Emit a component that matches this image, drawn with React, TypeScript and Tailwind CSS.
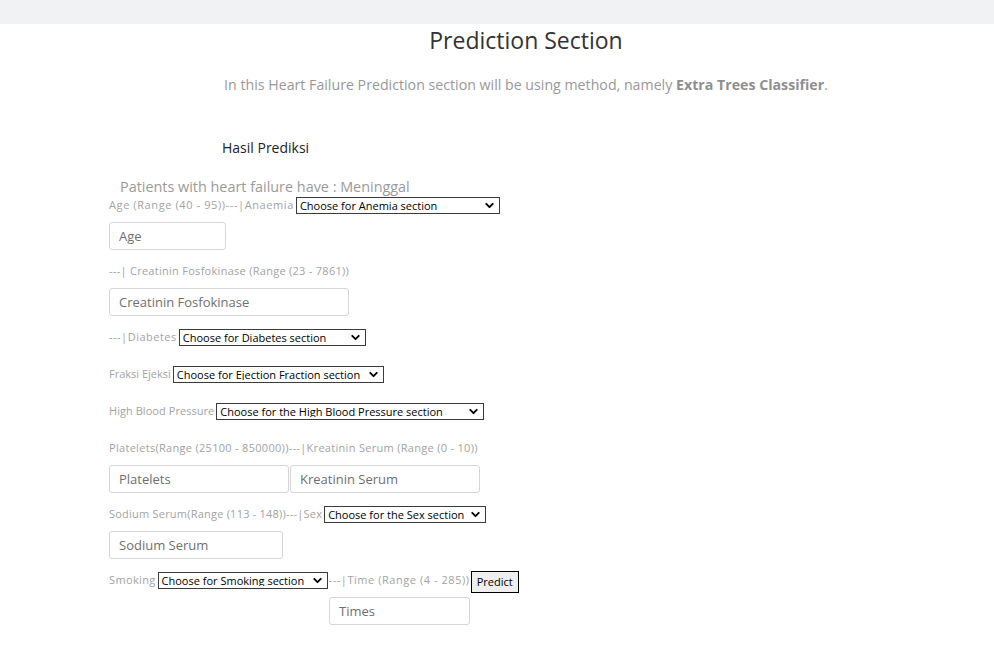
import { ChevronDown } from "lucide-react";

const font = { fontFamily: '"Open Sans", "Noto Sans", sans-serif' };

function Select({ text, w }: { text: string; w: string }) {
    return (
        <span className={`relative inline-flex items-center h-[17px] border border-[#3b3b3b] bg-white ${w}`}>
            <select className="appearance-none w-full h-full pl-[3px] pr-4 text-[11px] leading-none text-black outline-none">
                <option>{text}</option>
            </select>
            <ChevronDown size={13} strokeWidth={3.5} className="absolute right-[3px] text-black pointer-events-none" />
        </span>
    );
}

function Field({ ph, w }: { ph: string; w: string }) {
    return (
        <input
            placeholder={ph}
            className={`h-[28px] ${w} border border-[#d4d6d9] rounded-[3px] px-[9px] text-[13px] text-[#555] placeholder:text-[#6f6f6f] outline-none`}
        />
    );
}

// the original font runs wider, so some labels get a little tracking
function Label({ children, t = "" }: { children: React.ReactNode; t?: string }) {
    return <span className={`text-[11px] text-[#a3a3a3] mr-[2px] whitespace-nowrap ${t}`}>{children}</span>;
}

export default function App() {
    return (
        <div className="w-[994px] h-[672px] bg-white overflow-hidden" style={font}>
            {/* Top bar */}
            <div className="h-[24px] bg-[#f1f2f4]" />

            {/* Header */}
            <h1 className="mt-[2px] h-[28px] text-center text-[23px] leading-[28px] text-[#333] pl-[58px]">
                Prediction Section
            </h1>
            <p className="mt-[22px] h-[18px] text-center text-[14.2px] leading-[18px] text-[#999] pl-[58px]">
                In this Heart Failure Prediction section will be using method, namely{" "}
                <b className="font-bold text-[#8f8f8f]">Extra Trees Classifier</b>.
            </p>

            {/* Result */}
            <div className="mt-[45px] pl-[222px] h-[18px] text-[14px] leading-[18px] text-[#222]">Hasil Prediksi</div>
            <div className="mt-[21px] pl-[120px] h-[18px] text-[14.4px] leading-[18px] text-[#9a9a9a]">
                Patients with heart failure have : Meninggal
            </div>

            {/* Form */}
            <div className="pl-[109px] flex flex-col">
                <div className="h-[18px] flex items-center">
                    <Label t="tracking-[0.6px]">Age (Range (40 - 95))---|Anaemia</Label>
                    <Select text="Choose for Anemia section" w="w-[204px]" />
                </div>
                <div className="mt-[8px]">
                    <Field ph="Age" w="w-[117px]" />
                </div>
                <div className="mt-[12px] h-[18px] flex items-center">
                    <Label t="tracking-[0.28px]">---| Creatinin Fosfokinase (Range (23 - 7861))</Label>
                </div>
                <div className="mt-[8px]">
                    <Field ph="Creatinin Fosfokinase" w="w-[240px]" />
                </div>
                <div className="mt-[12px] h-[18px] flex items-center">
                    <Label t="tracking-[0.5px]">---|Diabetes</Label>
                    <Select text="Choose for Diabetes section" w="w-[187px]" />
                </div>
                <div className="mt-[19px] h-[18px] flex items-center">
                    <Label>Fraksi Ejeksi</Label>
                    <Select text="Choose for Ejection Fraction section" w="w-[211px]" />
                </div>
                <div className="mt-[19px] h-[18px] flex items-center">
                    <Label t="tracking-[0.05px]">High Blood Pressure</Label>
                    <Select text="Choose for the High Blood Pressure section" w="w-[268px]" />
                </div>
                <div className="mt-[19px] h-[18px] flex items-center">
                    <Label t="tracking-[0.3px]">Platelets(Range (25100 - 850000))---|Kreatinin Serum (Range (0 - 10))</Label>
                </div>
                <div className="mt-[8px] flex gap-[1px]">
                    <Field ph="Platelets" w="w-[180px]" />
                    <Field ph="Kreatinin Serum" w="w-[190px]" />
                </div>
                <div className="mt-[12px] h-[18px] flex items-center">
                    <Label t="tracking-[0.22px]">Sodium Serum(Range (113 - 148))---|Sex</Label>
                    <Select text="Choose for the Sex section" w="w-[162px]" />
                </div>
                <div className="mt-[8px]">
                    <Field ph="Sodium Serum" w="w-[174px]" />
                </div>
                <div className="mt-[12px] h-[18px] flex items-center">
                    <Label t="tracking-[0.35px]">Smoking</Label>
                    <Select text="Choose for Smoking section" w="w-[170px]" />
                    <span className="ml-[1px] text-[11px] tracking-[0.55px] text-[#a3a3a3] whitespace-nowrap">---|Time (Range (4 - 285))</span>
                    <button className="ml-[1px] mt-[4px] h-[22px] px-[5px] bg-[#efefef] border border-black text-[11px] text-black">
                        Predict
                    </button>
                </div>
                <div className="mt-[8px] pl-[220px]">
                    <Field ph="Times" w="w-[141px]" />
                </div>
            </div>
        </div>
    );
}
